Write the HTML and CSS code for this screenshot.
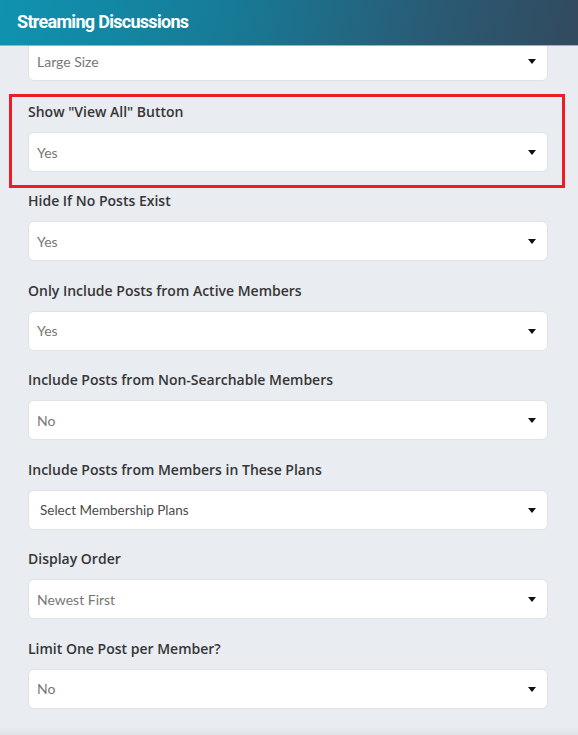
FILE: index.html
```html
<!DOCTYPE html>
<html>
<head>
<meta charset="utf-8">
<link rel="stylesheet" href="styles.css">
</head>
<body>
<div class="panel">
  <header class="header"><h1 class="title">Streaming Discussions</h1></header>
  <div class="scroll">
    <div class="form">
      <div class="group first">
        <div class="select"><span class="value">Large Size</span><span class="caret"></span></div>
      </div>
      <div class="group highlighted">
        <label class="label">Show "View All" Button</label>
        <div class="select"><span class="value">Yes</span><span class="caret"></span></div>
      </div>
      <div class="group">
        <label class="label">Hide If No Posts Exist</label>
        <div class="select"><span class="value">Yes</span><span class="caret"></span></div>
      </div>
      <div class="group">
        <label class="label">Only Include Posts from Active Members</label>
        <div class="select"><span class="value">Yes</span><span class="caret"></span></div>
      </div>
      <div class="group">
        <label class="label">Include Posts from Non-Searchable Members</label>
        <div class="select"><span class="value">No</span><span class="caret"></span></div>
      </div>
      <div class="group">
        <label class="label">Include Posts from Members in These Plans</label>
        <div class="select multi"><span class="value">Select Membership Plans</span><span class="caret"></span></div>
      </div>
      <div class="group">
        <label class="label">Display Order</label>
        <div class="select"><span class="value">Newest First</span><span class="caret"></span></div>
      </div>
      <div class="group">
        <label class="label">Limit One Post per Member?</label>
        <div class="select"><span class="value">No</span><span class="caret"></span></div>
      </div>
    </div>
  </div>
  <div class="footer-shade"></div>
</div>
</body>
</html>
```
FILE: styles.css
```css
* { box-sizing: border-box; }
html, body { margin: 0; padding: 0; }
body {
  width: 578px;
  height: 735px;
  overflow: hidden;
  background: #e9ecf1;
  font-family: "Open Sans", "Liberation Sans", sans-serif;
}
.panel {
  height: 735px;
  display: flex;
  flex-direction: column;
  background: #e9ecf1;
}
.header {
  height: 46px;
  flex: none;
  background: linear-gradient(100deg, #0f93b0 0%, #177a96 40%, #2a5a74 75%, #324a5e 100%);
  border-bottom: 1px solid #8fb6c4;
  display: flex;
  align-items: center;
  padding: 0 17px 2px;
  position: relative;
  z-index: 2;
}
.title {
  margin: 0;
  color: #ffffff;
  font-family: "Roboto", "Lato", sans-serif;
  font-weight: 700;
  font-size: 18px;
  letter-spacing: -0.7px;
}
.scroll {
  flex: 1;
  overflow: hidden;
}
.form {
  margin-top: -5px;
  display: flex;
  flex-direction: column;
}
.group {
  margin: 0 30px 0 28px;
  padding-bottom: 20.6px;
  display: flex;
  flex-direction: column;
  gap: 11px;
}
.group.first { padding-bottom: 22px; }
.group.highlighted {
  margin: -9px 13px 4px 9px;
  padding: 6px 14px 13px 16px;
  border: 3px solid #ee1c25;
  gap: 11px;
}
.label {
  font-family: "Open Sans", "Inter", sans-serif;
  font-weight: 600;
  font-size: 14px;
  line-height: 18px;
  color: #363636;
}
.select {
  height: 40px;
  background: #ffffff;
  border: 1px solid #dfe3e8;
  border-radius: 6px;
  display: flex;
  align-items: center;
  justify-content: space-between;
  padding: 0 11px 0 8px;
}
.value {
  font-family: "Lato", "Open Sans", sans-serif;
  font-size: 14px;
  color: #777777;
}
.multi .value {
  padding-left: 3px;
  font-size: 13.5px;
  color: #4a4a4a;
}
.caret {
  width: 0;
  height: 0;
  border-left: 4px solid transparent;
  border-right: 4px solid transparent;
  border-top: 5px solid #111;
  margin-top: 1px;
}
.footer-shade {
  height: 8px;
  flex: none;
  background: linear-gradient(#e9ecf1, #dfe2e7);
}
```
